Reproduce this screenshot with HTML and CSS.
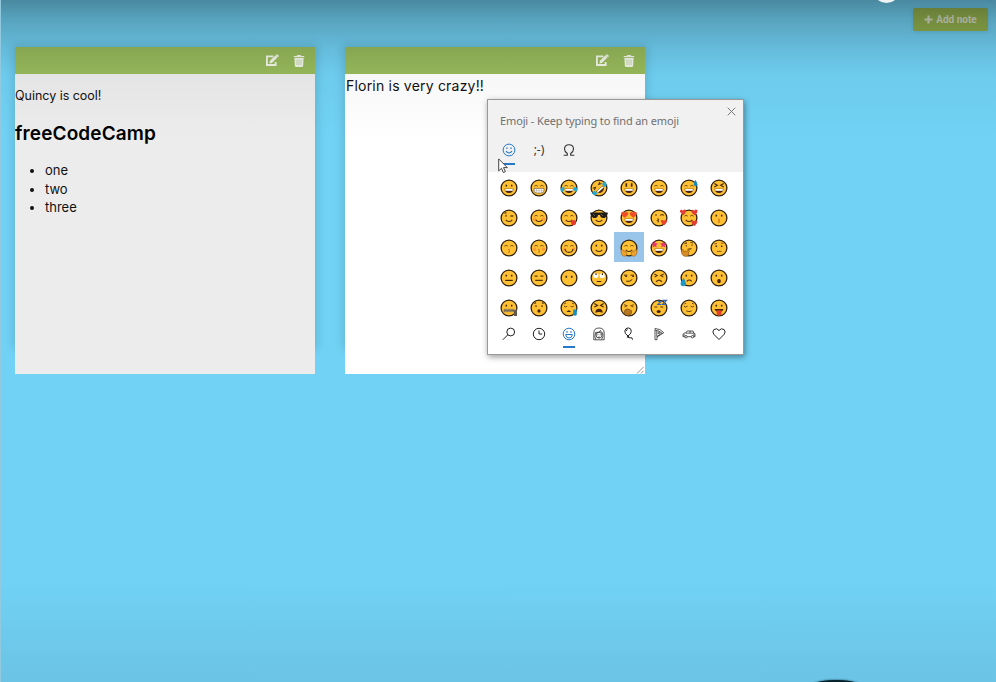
FILE: index.html
```html
<!DOCTYPE html>
<html lang="en">
<head>
<meta charset="utf-8">
<title>Notes</title>
<link rel="stylesheet" href="styles.css">
</head>
<body>
<svg class="defs" aria-hidden="true">
  <symbol id="face" viewBox="0 0 18 18"><circle cx="9" cy="9" r="7.9" fill="#ffc033" stroke="#30210f" stroke-width="1.3"/></symbol>
  <symbol id="dots" viewBox="0 0 18 18"><path d="M6.3 5.7v1.8M11.7 5.7v1.8" stroke="#402708" stroke-width="1.5" fill="none"/></symbol>
  <symbol id="arcs" viewBox="0 0 18 18"><path d="M4.4 7.2q1.7-1.8 3.4 0M10.2 7.2q1.7-1.8 3.4 0" stroke="#7b5215" stroke-width="1" fill="none"/></symbol>
  <symbol id="grin" viewBox="0 0 18 18"><path d="M4.5 9.7h9q-.6 4.3-4.5 4.3T4.5 9.7z" fill="#48230f"/><path d="M5.2 10h7.6v1.8H5.2z" fill="#fff"/></symbol>
  <symbol id="smile" viewBox="0 0 18 18"><path d="M5.7 10.8q3.3 3.4 6.6 0" stroke="#4f300b" stroke-width="1.1" fill="none"/></symbol>
  <symbol id="blush" viewBox="0 0 18 18"><g fill="#ff9a3a"><circle cx="4.6" cy="10.2" r="1.7"/><circle cx="13.4" cy="10.2" r="1.7"/></g></symbol>
  <symbol id="edit" viewBox="0 0 16 14"><path d="M9 2.5H2v9.3h9.4V8.5" fill="none" stroke="currentColor" stroke-width="2"/><path d="M5.2 7.4 11.3 1.3l2.2 2.2-6.1 6.1-2.6.5zM12 .7q.8-.8 1.6 0l.9.9q.6.7-.1 1.4l-.5.5-2.4-2.3z" fill="currentColor"/></symbol>
  <symbol id="trash" viewBox="0 0 12 13"><path d="M.3 1h3.2l.7-1h3.6l.7 1h3.2v1.5H.3zM1 3.2h10l-.5 8.5q-.1 1.2-1.2 1.2H2.7q-1.1 0-1.2-1.2z" fill="currentColor"/><path d="M3.8 5v6M6 5v6M8.2 5v6" stroke="#9bb86b" stroke-width=".5"/></symbol>
</svg>

<header class="topbar">
  <button class="add"><svg viewBox="0 0 10 10"><path d="M5 .5v9M.5 5h9" stroke="currentColor" stroke-width="2.4"/></svg>Add note</button>
</header>
<main class="notes">
  <section class="note">
    <div class="tools"><svg class="edit"><use href="#edit"/></svg><svg class="trash"><use href="#trash"/></svg></div>
    <div class="content">
      <p>Quincy is cool!</p>
      <h2>freeCodeCamp</h2>
      <ul><li>one</li><li>two</li><li>three</li></ul>
    </div>
  </section>
  <section class="note">
    <div class="tools"><svg class="edit"><use href="#edit"/></svg><svg class="trash"><use href="#trash"/></svg></div>
    <div class="content editor"><span>Florin is very crazy!!</span><svg class="grip" viewBox="0 0 8 8"><path d="M1 7.5 7.5 1M4.8 7.5l2.7-2.7" stroke="#777" stroke-width=".8"/></svg></div>
  </section>
</main>
<div class="shade"></div>
<div class="avatar"></div>
<div class="shape"></div>

<aside class="picker">
  <div class="head">
    <div class="title"><span>Emoji - Keep typing to find an emoji</span><svg class="close" viewBox="0 0 9 9"><path d="m.7.7 7.6 7.6M8.3.7.7 8.3" stroke="#777" stroke-width="1"/></svg></div>
    <div class="tabs">
      <span class="on"><svg viewBox="0 0 14 14" fill="none" stroke="#2579cb"><circle cx="7" cy="7" r="5.9"/><path d="M4 8.2q3 3.6 6 0M5 4.6v1.3M9 4.6v1.3" stroke-width="1.2"/></svg></span>
      <span>;-)</span>
      <span class="omega"><svg viewBox="0 0 12 12"><path d="M.7 11.2h3.6V9.4Q1.5 7.8 1.5 5.1 1.5.8 6 .8t4.5 4.3q0 2.7-2.8 4.3v1.8h3.6" fill="none" stroke="#333" stroke-width="1.1"/></svg></span>
    </div>
  </div>
  <div class="grid">
    <i><svg viewBox="0 0 18 18"><use href="#face"/><use href="#dots"/><use href="#grin"/></svg></i>
    <i><svg viewBox="0 0 18 18"><use href="#face"/><use href="#arcs"/><path d="M4 9.4h10v2q0 2.7-3 2.7H7q-3 0-3-2.7z" fill="#fff" stroke="#614727" stroke-width=".6"/><path d="M4 11.7h10M6.5 9.5v4.3M9 9.5V14M11.5 9.5v4.3" stroke="#a59d92" stroke-width=".5"/></svg></i>
    <i><svg viewBox="0 0 18 18"><use href="#face"/><use href="#arcs"/><use href="#grin"/><path d="M1 9q3-1.8 3.5-.4 0 3.5-2 4.4Q-.6 12.6 1 9zm16 0q-3-1.8-3.5-.4 0 3.5 2 4.4 3.1-.4 1.5-4z" fill="#25a8cf"/></svg></i>
    <i><svg viewBox="0 0 18 18"><use href="#face"/><g transform="rotate(-42 9 9)"><path d="m4.2 5 2.7 1.2-2.7 1.2M13.8 5l-2.7 1.2 2.7 1.2" stroke="#4b2d0d" fill="none"/><use href="#grin"/><path d="M0 8h4.2v4H1zM18 8h-4.2v4H17z" fill="#25a8cf"/></g></svg></i>
    <i><svg viewBox="0 0 18 18"><use href="#face"/><path d="M6.3 4.3v3.4M11.7 4.3v3.4" stroke="#402708" stroke-width="1.6"/><use href="#grin"/></svg></i>
    <i><svg viewBox="0 0 18 18"><use href="#face"/><use href="#arcs"/><use href="#grin"/></svg></i>
    <i><svg viewBox="0 0 18 18"><use href="#face"/><use href="#arcs"/><use href="#grin"/><path d="M15.2.8q4 5 1.1 6.4-4.3.3-1.1-6.4z" fill="#168ab4"/></svg></i>
    <i><svg viewBox="0 0 18 18"><use href="#face"/><path d="m4.3 4.5 3 1.7-3 1.7m9.4-3.4-3 1.7 3 1.7" fill="none" stroke="#402708" stroke-width="1.1"/><use href="#grin"/></svg></i>

    <i><svg viewBox="0 0 18 18"><use href="#face"/><path d="M6 5.7v2M10.4 7h3M4.3 4.2l2.2-.6" stroke="#68440f" stroke-width="1.3"/><use href="#smile"/></svg></i>
    <i><svg viewBox="0 0 18 18"><use href="#face"/><use href="#blush"/><use href="#arcs"/><use href="#smile"/></svg></i>
    <i><svg viewBox="0 0 18 18"><use href="#face"/><use href="#arcs"/><use href="#smile"/><path d="M10.5 12q2.2-1 4-1 3 3.7 0 5.2-3.3.6-4-4.2z" fill="#e83b2d"/></svg></i>
    <i><svg viewBox="0 0 18 18"><use href="#face"/><path d="M.3 3.4h17.4v2l-1.2.5q-.3 3.1-3.2 3.1-3 0-3.3-3H8q-.3 3-3.3 3Q1.8 9 1.5 5.9L.3 5.4z" fill="#201c19"/><path d="m3 5 2 2m6-2 2 2" stroke="#77736f" stroke-width=".7"/><use href="#smile"/></svg></i>
    <i><svg viewBox="0 0 18 18"><use href="#face"/><path d="M4.5 8.7Q-.6 4.6 2 3q1.8-.8 2.7 1Q6.2 2 7.8 3.6q1.6 2-3.3 5.1zm9 0q-4.9-3.1-3.3-5.1Q11.8 2 13.3 4q.9-1.8 2.7-1 2.6 1.6-2.5 5.7z" fill="#f04c2a"/><use href="#grin"/></svg></i>
    <i><svg viewBox="0 0 18 18"><use href="#face"/><path d="M6 5v2M10.2 6.4q2-1.5 3.8 0M7.2 9.8q3 .5.4 1.6 2.4 1 0 1.7" fill="none" stroke="#684512" stroke-width="1.1"/><path d="M14 16.3q-5-4.7-2-5.3 1.5-.3 2 1.3.8-2.4 2.7-1 1.5 1.8-2.7 5z" fill="#e94131"/></svg></i>
    <i><svg viewBox="0 0 18 18"><use href="#face"/><use href="#arcs"/><use href="#smile"/><path d="M3.6 6.2Q-1.7 2.8.6 1q1.5-.8 2.3.8Q4.2-.3 5.9 1.1 7 3 3.6 6.2zm11 0Q9.8 2.8 11.8 1q1.6-.8 2.4.8Q15.6-.3 17.2 1.1q1.4 2-2.6 5.1zm-.3 11q-4.5-4.3-2.2-5.6 1.5-.5 2.1 1 1.1-2 2.8-.9 1.4 2-2.7 5.5z" fill="#e33c35"/></svg></i>
    <i><svg viewBox="0 0 18 18"><use href="#face"/><use href="#dots"/><path d="M8 10q3 0 .8 1.6 2.8 1.3-.8 2" fill="#f09020" stroke="#c37a1c" stroke-width=".8"/></svg></i>

    <i><svg viewBox="0 0 18 18"><use href="#face"/><use href="#arcs"/><path d="M8 10.3q3 .5.8 1.5 2.5 1.1-.8 1.6" fill="none" stroke="#c37a1c"/></svg></i>
    <i><svg viewBox="0 0 18 18"><use href="#face"/><use href="#blush"/><use href="#arcs"/><path d="M8 10.3q3 .5.8 1.5 2.5 1.1-.8 1.6" fill="none" stroke="#c37a1c"/></svg></i>
    <i><svg viewBox="0 0 18 18"><use href="#face"/><use href="#blush"/><use href="#arcs"/><path d="M5 10q.6 3.4 4 3.4t4-3.4" fill="none" stroke="#4f300b" stroke-width="1.1"/></svg></i>
    <i><svg viewBox="0 0 18 18"><use href="#face"/><use href="#dots"/><use href="#smile"/></svg></i>
    <i class="selected"><svg viewBox="0 0 18 18"><use href="#face"/><use href="#arcs"/><use href="#smile"/><path d="M1 11q2-1 3 1 3.5.5 3 3.5-.8 2-3 1.8Q1 16.7 1 11zm16 0q-2-1-3 1-3.5.5-3 3.5.8 2 3 1.8 3-.6 3-6.3z" fill="#eda22d" stroke="#9d661b" stroke-width=".6"/></svg></i>
    <i><svg viewBox="0 0 18 18"><use href="#face"/><path d="m4.7 2 .9 2.2 2.4.2-1.8 1.7.6 2.3-2.1-1.2L2.5 8.4l.6-2.3-1.9-1.7 2.5-.2zm8.6 0 .9 2.2 2.5.2-1.9 1.7.6 2.3-2.1-1.2-2.2 1.2.6-2.3L10 4.4l2.4-.2z" fill="#e63670"/><use href="#grin"/></svg></i>
    <i><svg viewBox="0 0 18 18"><use href="#face"/><path d="M6.3 6v1.6M12 5.5v1.6M4.5 4.6l2.5-.7M10.5 3.5l2.5.5M7.5 10.4l4-.8" stroke="#68440f" stroke-width="1.1"/><path d="M1.5 10.5q2-1 2.4 2l5-1q2 .2-.5 1.7 1.4 4-3 4.2-4.5-.4-3.9-6.9z" fill="#d88c25" stroke="#86551b" stroke-width=".6"/></svg></i>
    <i><svg viewBox="0 0 18 18"><use href="#face"/><path d="M6.3 6.5v1.6M11.7 6.5v1.6" stroke="#402708" stroke-width="1.5"/><path d="m4.3 5 2.7-.6M10.8 4l2.7.4M7 12.4h4.5" stroke="#8b5b18" fill="none"/></svg></i>

    <i><svg viewBox="0 0 18 18"><use href="#face"/><use href="#dots"/><path d="M5.2 11.4h7.6" stroke="#402708" stroke-width="1.2"/></svg></i>
    <i><svg viewBox="0 0 18 18"><use href="#face"/><path d="M4.6 7.1h3m2.8 0h3M5.2 11.4h7.6" stroke="#59370d" stroke-width="1.2"/></svg></i>
    <i><svg viewBox="0 0 18 18"><use href="#face"/><path d="M6.3 6.7v2M11.7 6.7v2" stroke="#402708" stroke-width="1.6"/></svg></i>
    <i><svg viewBox="0 0 18 18"><use href="#face"/><g fill="#fff"><circle cx="5.8" cy="6.5" r="2.6"/><circle cx="12.2" cy="6.5" r="2.6"/></g><path d="M6 4.3v1.6M12.4 4.3v1.6M6.8 12.5h4.4" stroke="#402708" stroke-width="1.2"/></svg></i>
    <i><svg viewBox="0 0 18 18"><use href="#face"/><path d="M4 6.2h3.4m3.2 0H14M5.3 7.5H7m5.3 0H14M6.3 12.2q3.8 1 6-1.8" fill="none" stroke="#402708" stroke-width="1"/></svg></i>
    <i><svg viewBox="0 0 18 18"><use href="#face"/><path d="m4.3 5 2.9 1.6L4.7 8m9-3-2.9 1.6L13.3 8M6 12.8q3-3.4 6 0" fill="none" stroke="#59370d" stroke-width="1.1"/></svg></i>
    <i><svg viewBox="0 0 18 18"><use href="#face"/><use href="#dots"/><path d="M6.8 12.3q2.5-2.5 4.8 0" stroke="#402708" stroke-width="1.1" fill="none"/><path d="M3.8 9q-6 7-1 8.3 5.8.1 1-8.3z" fill="#1b96c5"/></svg></i>
    <i><svg viewBox="0 0 18 18"><use href="#face"/><use href="#dots"/><ellipse cx="9" cy="12.1" rx="1.8" ry="2.2" fill="#48230f"/></svg></i>

    <i><svg viewBox="0 0 18 18"><use href="#face"/><use href="#dots"/><path d="M4 10.3h10v2.4H4z" fill="#b8a98a" stroke="#594b38" stroke-width=".5"/><path d="M4 11.5h10" stroke="#6b5d49" stroke-width=".8"/><path d="M14 11h3v6h-3z" fill="#61594d"/></svg></i>
    <i><svg viewBox="0 0 18 18"><use href="#face"/><path d="M6 6.3V8M12 6.3V8M4.3 4.5l1.7-.8m6 0 1.7.8" stroke="#59370d" stroke-width="1.3"/><ellipse cx="9" cy="12" rx="1.6" ry="1.8" fill="#48230f"/></svg></i>
    <i><svg viewBox="0 0 18 18"><use href="#face"/><path d="M4 7.2q1.7 1.5 3.2 0m3.2 0q1.7 1.5 3.4 0M4 5l2-1m6 0 2 1" fill="none" stroke="#68440f" stroke-width=".9"/><path d="M6.5 13q2.4-3.5 4.5 0z" fill="#402708"/><path d="M13.2 10.5h3.6v5.2q-1.6 2.2-3.6 0z" fill="#168fbe"/></svg></i>
    <i><svg viewBox="0 0 18 18"><use href="#face"/><path d="m4.3 4.5 3.2 2-3.2 1.6m9.4-3.6-3.2 2 3.2 1.6" fill="none" stroke="#402708" stroke-width="1.1"/><path d="M5.3 13.8q.2-4 3.7-4t3.7 4q-3.7-1.8-7.4 0z" fill="#48230f"/></svg></i>
    <i><svg viewBox="0 0 18 18"><use href="#face"/><path d="m4 5.7 3.2 1L4.5 8m9.4-2.3-3.2 1L13.5 8" fill="none" stroke="#68440f" stroke-width=".9"/><path d="M5 11q2-2 4.4-.5 3.3.5 1.8 4.2-2 2.5-5 1.5Q3 15 5 11z" fill="#b9781f" stroke="#66431a" stroke-width=".6"/></svg></i>
    <i><svg viewBox="0 0 18 18"><use href="#face"/><path d="M4.3 8h3M10.3 8h3" stroke="#59370d" stroke-width="1.1"/><ellipse cx="8.7" cy="12.5" rx="2" ry="1.5" fill="#48230f"/><path d="M8 2.3h3L8 5.5h3.2M12.3 1.3h4.2l-4 4.2h4.3" fill="none" stroke="#3864a8" stroke-width="1.2"/></svg></i>
    <i><svg viewBox="0 0 18 18"><use href="#face"/><path d="M4 7.2q1.7 1.6 3.5 0m3 0q1.7 1.6 3.5 0M6.3 11.9q2.7 1.5 5.4 0M4.3 5 6 4.3m6 0 1.7.7" fill="none" stroke="#6d4914"/></svg></i>
    <i><svg viewBox="0 0 18 18"><use href="#face"/><use href="#dots"/><path d="M4.5 10h9q-1 3-4.5 3t-4.5-3z" fill="#48230f"/><path d="M6.7 11.2h4.8v3.6q-2.4 3.7-4.8 0z" fill="#e73d2c"/></svg></i>
  </div>
  <nav class="cats">
    <i><svg viewBox="0 0 14 14"><circle cx="8.7" cy="5" r="3.9"/><path d="M5.8 7.8.8 12.8"/></svg></i>
    <i><svg viewBox="0 0 14 14"><circle cx="7" cy="7" r="5.7"/><path d="M7 3.5V7h3.2"/></svg></i>
    <i class="on"><svg viewBox="0 0 14 14"><circle cx="7" cy="7" r="5.8"/><path d="M5 4v2M9 4v2M3.6 7.5h6.8q-.5 3.5-3.4 3.5T3.6 7.5z"/></svg></i>
    <i><svg class="fine" viewBox="0 0 14 14"><path d="M1.8 12.8V6q0-5 5.2-5t5.2 5v6.8zM4 12.5q-2-2-.5-7 4 .2 5-2 0 2 2.2 2.3 1 4.5-1.2 6.7"/><circle cx="7" cy="8.2" r="2.9"/><path d="M5.8 7.3v1m2.4-1v1M6 10q1 .7 2 0"/></svg></i>
    <i><svg viewBox="0 0 14 14"><path d="M6 9Q2.5 6.8 2.8 4 3.4.8 6.3.9q3 .1 3 3.5Q9 7.2 6 9zm0 0-.8 1.2h1.7L6 9q.7 2.7 2.3 1.7 2.1-.7 2.2 2M4.4 4q0-1.4 1.2-1.7"/></svg></i>
    <i><svg class="fine" viewBox="0 0 14 14"><path d="M3 1.5v11.2h2V10l6.8-4.3Q8.3 1.5 3 1.5zM4.8 3.7v6l5-3.7M3.2 3.3q4 0 7 3.1"/><circle cx="6.8" cy="5.9" r=".8"/></svg></i>
    <i><svg class="fine" viewBox="0 0 14 14"><path d="M1 9.7V7.2q.5-1.4 3-1.4L5.2 4h5.8l.8 2 1.2.8v2.9zM4 6.2h8M8 4v2M1 8h2M11 8h2"/><circle cx="4" cy="9.7" r="1.2" fill="#fff"/><circle cx="10.5" cy="9.7" r="1.2" fill="#fff"/></svg></i>
    <i><svg viewBox="0 0 14 14"><path d="M7 12.5 1.9 7.4Q-.2 4.8 1.9 2.6 4.8.5 7 3.5 9.2.5 12.1 2.6q2.1 2.2 0 4.8z"/></svg></i>
  </nav>
</aside>
<svg class="cursor" viewBox="0 0 10 16"><path d="M.7.9v12l2.8-2.6 1.9 4.3 2-.9-1.9-4.1h3.8z" fill="#fff" stroke="#333" stroke-width=".9"/></svg>
</body>
</html>
```
FILE: styles.css
```css
* { box-sizing: border-box; }
body {
  margin: 0;
  width: 996px;
  height: 682px;
  overflow: hidden;
  position: relative;
  background: linear-gradient(#71d2f5 0 580px, #6bc3e5 682px);
  font-family: Inter, "Open Sans", sans-serif;
  font-size: 13px;
  color: #111;
  border-left: 1px solid #93c9df;
}
.defs { position: absolute; width: 0; height: 0; }
.topbar { height: 47px; padding: 8px 8px 0; display: flex; justify-content: flex-end; }
.add {
  height: 23px; width: 75px; padding: 0; border: 0; border-radius: 2px;
  display: flex; align-items: center; justify-content: center; gap: 3px;
  background: #94b34f; color: #d9dfc8;
  font: bold 10px Roboto, sans-serif;
  box-shadow: 0 1px 4px rgba(0, 0, 0, .1);
}
.add svg { width: 9px; height: 9px; }
.notes { display: flex; gap: 30px; padding-left: 14px; }
.note { width: 300px; height: 300px; box-shadow: 0 0 9px 2px rgba(0, 0, 0, .13); }
.tools {
  height: 27px; padding: 0 10px 0 0; background: #99bb5c; color: #f4f8ec;
  display: flex; align-items: center; justify-content: flex-end; gap: 13px;
}
.edit { width: 15px; height: 13px; }
.trash { width: 12px; height: 12px; }
.content { height: 300px; background: #ececec; overflow: hidden; }
.content p { margin: 12px 0 0; line-height: 19px; font-size: 12.5px; letter-spacing: -.02px; }
.content h2 { margin: 15px 0 0; line-height: 28px; font-size: 19px; font-weight: 600; letter-spacing: .13px; color: #000; }
.content ul { margin: 13px 0 0; padding-left: 30px; line-height: 18.7px; font-size: 13px; }
.editor { background: #fff; padding: 2px 1px; font-size: 14px; line-height: 20px; letter-spacing: .2px; position: relative; }
.grip { position: absolute; right: 1px; bottom: 0; width: 8px; height: 8px; }
.shade {
  position: absolute; inset: 0 0 auto 0; height: 140px; pointer-events: none;
  background: linear-gradient(rgba(0, 0, 0, .35), rgba(0, 0, 0, .22) 20px, rgba(0, 0, 0, .11) 48px, rgba(0, 0, 0, .03) 76px, transparent);
}
.avatar { position: absolute; left: 872px; top: -23px; width: 27px; height: 26px; border-radius: 50%; background: #eef3f4; }
.shape { position: absolute; left: 805px; top: 680px; width: 60px; height: 20px; border-radius: 50%; background: #05222c; box-shadow: 0 0 2px #05222c; }
.picker {
  position: absolute; left: 486px; top: 99px; width: 257px; height: 256px;
  background: #fff; border: 1px solid #999; box-shadow: 1px 2px 6px rgba(0, 0, 0, .4);
}
.head { height: 72px; background: #f1f1f1; padding: 0 7px 0 12px; }
.title { height: 35px; display: flex; justify-content: space-between; font: 11px/15px "Noto Sans", sans-serif; color: #707070; }
.title span { padding-top: 13px; letter-spacing: -.13px; }
.close { width: 9px; height: 9px; margin-top: 7px; }
.tabs { display: flex; margin-left: -6px; font: 12px/30px "Noto Sans", sans-serif; color: #333; }
.tabs span { width: 30px; height: 30px; display: flex; align-items: center; justify-content: center; }
.tabs svg { width: 14px; height: 14px; }
.tabs .omega svg { width: 12px; height: 12px; }
.tabs .on, .cats .on { position: relative; }
.tabs .on::after, .cats .on::after {
  content: ""; position: absolute; left: 9px; bottom: 0; width: 12px; height: 2px; background: #2579cb;
}
.grid { display: grid; grid-template-columns: repeat(8, 30px); grid-auto-rows: 30px; padding-left: 6px; }
.grid i { padding-top: 2px; }
.grid i, .cats i { display: flex; align-items: center; justify-content: center; }
.grid svg { width: 18px; height: 18px; }
.grid .selected { background: #99c5eb; }
.cats { display: flex; position: relative; margin-top: -3px; padding-left: 6px; }
.cats i { width: 30px; height: 29px; }
.cats svg { width: 14px; height: 14px; fill: none; stroke: #222; stroke-width: 1; }
.cats .fine { stroke-width: .75; }
.cats .on svg { stroke: #2579cb; }
.cursor { position: absolute; left: 497px; top: 158px; width: 10px; height: 16px; }
```
